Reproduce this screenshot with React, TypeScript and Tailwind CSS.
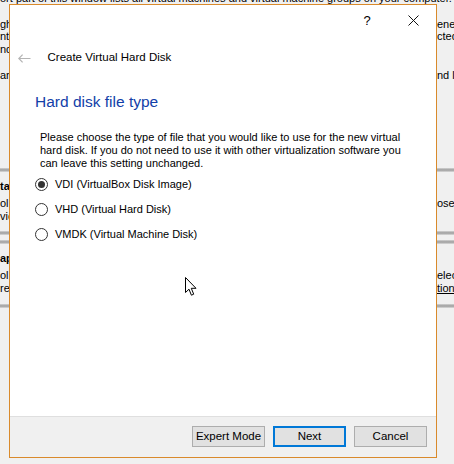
import React from "react";

type Row = { left: string; right?: string; bold?: boolean; link?: boolean };

function BgRow({ left, right, bold, link }: Row) {
  return (
    <div className="flex h-[12.75px] items-center justify-between whitespace-nowrap leading-[12.75px]">
      <span className={bold ? "font-bold" : ""}>{left}</span>
      <span className={"w-[17px] overflow-hidden " + (link ? "underline" : "")}>{right}</span>
    </div>
  );
}

function Bar() {
  return <div className="h-[4px] w-full bg-gradient-to-b from-[#d4d4d4] via-[#9c9c9c] to-[#dcdcdc]" />;
}

function Section({ title, rows }: { title: string; rows: Row[] }) {
  return (
    <div>
      <Bar />
      <div className="pt-[8px] pb-[9px]">
        <BgRow left={title} bold />
        <div className="mt-[4px]">
          {rows.map((r, i) => (
            <BgRow key={i} {...r} />
          ))}
        </div>
      </div>
      <Bar />
    </div>
  );
}

function Radio({ label, checked }: { label: string; checked?: boolean }) {
  return (
    <label className="flex h-[25px] items-center gap-[7px]">
      <span className="flex h-[13px] w-[13px] items-center justify-center rounded-full border border-[#333] bg-white">
        {checked && <span className="h-[7px] w-[7px] rounded-full bg-[#333]" />}
      </span>
      <span>{label}</span>
    </label>
  );
}

function WinButton({ children, primary }: { children: React.ReactNode; primary?: boolean }) {
  return (
    <button
      className={
        "h-[21px] w-[73px] bg-[#e1e1e1] text-[11.5px] text-black " +
        (primary ? "border-2 border-[#0078d7]" : "border border-[#adadad]")
      }
    >
      {children}
    </button>
  );
}

export default function App() {
  return (
    <div className="relative h-[464px] w-[454px] overflow-hidden bg-[#f0f0f0] font-['Liberation_Sans',Arial,sans-serif] text-[11px] text-black">
      {/* background VirtualBox window */}
      <div className="-mt-[8px]">
        <BgRow left="ort part of this window lists all virtual machines and virtual machine groups on your computer." />
        <BgRow left="" />
        <BgRow left="ghlighted" right="ened" />
        <BgRow left="nt" right="cted" />
        <BgRow left="ndividual" />
        <BgRow left="" />
        <BgRow left="ar" right="nd la" />
      </div>
      <div className="mt-[86.75px]">
        <Section title="tails" rows={[{ left: "ol", right: "ose" }, { left: "vic" }]} />
        <div className="mt-[5px]">
          <Section
            title="apshots"
            rows={[
              { left: "ol", right: "elec" },
              { left: "re", right: "tion", link: true },
            ]}
          />
        </div>
      </div>

      {/* dialog window */}
      <div className="absolute left-[9px] top-[4px] flex h-[454px] w-[428px] flex-col border border-[#d98a2b] bg-white">
        <div className="flex h-[30px] justify-end">
          <div className="flex w-[46px] items-center justify-center text-[13px] leading-none">?</div>
          <div className="flex w-[46px] items-center justify-center">
            <svg width="11" height="11" viewBox="0 0 11 11" stroke="#111" strokeWidth="1" fill="none">
              <path d="M0.5 0.5 L10.5 10.5 M10.5 0.5 L0.5 10.5" />
            </svg>
          </div>
        </div>

        <div className="flex-1">
          <div className="mt-[15px] flex h-[16px] items-center text-[11.5px]">
            <svg className="ml-[8px]" width="13" height="9" viewBox="0 0 13 9" stroke="#b4b4b4" strokeWidth="1.2" fill="none">
              <path d="M0.8 4.5 H12.5 M4.6 0.7 L0.8 4.5 L4.6 8.3" />
            </svg>
            <span className="ml-[16.5px]">Create Virtual Hard Disk</span>
          </div>

          <h1 className="ml-[25px] mt-[26px] h-[20px] text-[15.5px] leading-[20px] font-normal text-[#1240a8]">
            Hard disk file type
          </h1>

          <div className="ml-[30px] mt-[19px]">
            <p className="leading-[13px]">
              Please choose the type of file that you would like to use for the new virtual
              <br />
              hard disk. If you do not need to use it with other virtualization software you
              <br />
              can leave this setting unchanged.
            </p>
            <div className="-ml-[5px] mt-[2px] flex flex-col">
              <Radio label="VDI (VirtualBox Disk Image)" checked />
              <Radio label="VHD (Virtual Hard Disk)" />
              <Radio label="VMDK (Virtual Machine Disk)" />
            </div>
          </div>
        </div>

        <div className="flex h-[41px] justify-end gap-[8px] border-t border-[#dfdfdf] bg-[#f0f0f0] pr-[9px] pt-[9px]">
          <WinButton>Expert Mode</WinButton>
          <WinButton primary>Next</WinButton>
          <WinButton>Cancel</WinButton>
        </div>
      </div>

      {/* mouse pointer */}
      <svg className="absolute left-[185px] top-[277px]" width="13" height="20" viewBox="0 0 13 20">
        <path d="M0.5 0.5 L0.5 15.5 L4 12.2 L6.4 18.2 L8.7 17.2 L6.3 11.3 L11 11.3 Z" fill="#fff" stroke="#000" strokeWidth="1" strokeLinejoin="miter" />
      </svg>
    </div>
  );
}
